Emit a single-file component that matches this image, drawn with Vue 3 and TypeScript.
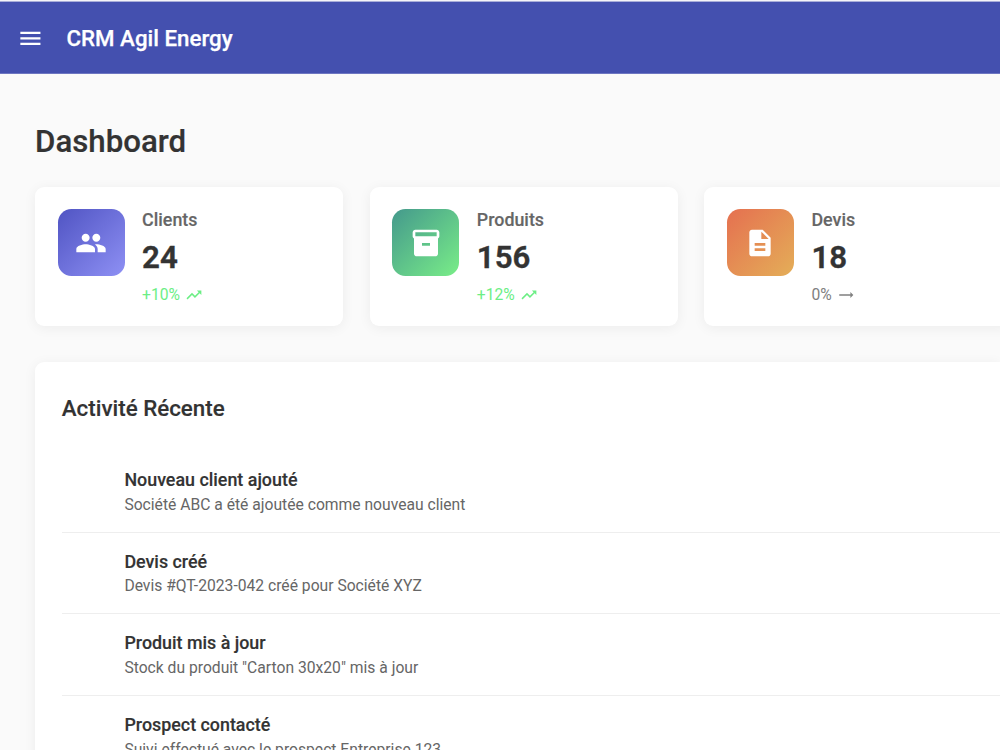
<script setup lang="ts">
interface Stat {
  label: string
  value: number
  change: string
  trend: 'up' | 'flat'
  tone: string
  icon: string
}

interface Activity {
  title: string
  detail: string
}

const trendIcons: Record<Stat['trend'], string> = {
  up: 'M16 6l2.29 2.29-4.88 4.88-4-4L2 16.59 3.41 18l6-6 4 4 6.3-6.29L22 12V6z',
  flat: 'M22 12l-4-4v3H3v2h15v3z',
}

const stats: Stat[] = [
  {
    label: 'Clients',
    value: 24,
    change: '+10%',
    trend: 'up',
    tone: 'indigo',
    icon: 'M16 11c1.66 0 2.99-1.34 2.99-3S17.66 5 16 5s-3 1.34-3 3 1.34 3 3 3zm-8 0c1.66 0 2.99-1.34 2.99-3S9.66 5 8 5 5 6.34 5 8s1.34 3 3 3zm0 2c-2.33 0-7 1.17-7 3.5V19h14v-2.5c0-2.33-4.67-3.5-7-3.5zm8 0c-.29 0-.62.02-.97.05 1.16.84 1.97 1.97 1.97 3.45V19h6v-2.5c0-2.33-4.67-3.5-7-3.5z',
  },
  {
    label: 'Produits',
    value: 156,
    change: '+12%',
    trend: 'up',
    tone: 'green',
    icon: 'M20 2H4c-1 0-2 .9-2 2v3.01c0 .72.43 1.34 1 1.69V20c0 1.1 1.1 2 2 2h14c.9 0 2-.9 2-2V8.7c.57-.35 1-.97 1-1.69V4c0-1.1-1-2-2-2zm-5 12H9v-2h6v2zm5-7H4V4h16v3z',
  },
  {
    label: 'Devis',
    value: 18,
    change: '0%',
    trend: 'flat',
    tone: 'orange',
    icon: 'M14 2H6c-1.1 0-1.99.9-1.99 2L4 20c0 1.1.89 2 1.99 2H18c1.1 0 2-.9 2-2V8l-6-6zm2 16H8v-2h8v2zm0-4H8v-2h8v2zm-3-5V3.5L18.5 9H13z',
  },
]

const activities: Activity[] = [
  { title: 'Nouveau client ajouté', detail: 'Société ABC a été ajoutée comme nouveau client' },
  { title: 'Devis créé', detail: 'Devis #QT-2023-042 créé pour Société XYZ' },
  { title: 'Produit mis à jour', detail: 'Stock du produit "Carton 30x20" mis à jour' },
  { title: 'Prospect contacté', detail: 'Suivi effectué avec le prospect Entreprise 123' },
]
</script>

<template>
  <div class="app">
    <header class="toolbar">
      <svg class="menu" viewBox="0 0 24 24"><path d="M3 18h18v-2H3v2zm0-5h18v-2H3v2zm0-7v2h18V6H3z" /></svg>
      <span class="brand">CRM Agil Energy</span>
    </header>
    <main class="content">
      <h1>Dashboard</h1>
      <section class="stats">
        <article v-for="s in stats" :key="s.label" class="card">
          <div class="badge" :class="s.tone">
            <svg viewBox="0 0 24 24"><path :d="s.icon" /></svg>
          </div>
          <div class="info">
            <h3>{{ s.label }}</h3>
            <div class="value">{{ s.value }}</div>
            <div class="change" :class="s.trend">
              <span>{{ s.change }}</span>
              <svg viewBox="0 0 24 24"><path :d="trendIcons[s.trend]" /></svg>
            </div>
          </div>
        </article>
      </section>
      <section class="panel">
        <h2>Activité Récente</h2>
        <ul>
          <li v-for="a in activities" :key="a.title">
            <div class="item-title">{{ a.title }}</div>
            <div class="item-detail">{{ a.detail }}</div>
          </li>
        </ul>
      </section>
    </main>
  </div>
</template>

<style>
body {
  margin: 0;
  overflow: hidden;
}
</style>

<style scoped>
.app {
  box-sizing: border-box;
  height: 750px;
  overflow: hidden;
  background: #fafafa;
  border-top: 1px solid #f4f4f8;
  font-family: Roboto, sans-serif;
  color: #333;
}
h1, h2, h3, ul {
  margin: 0;
  padding: 0;
  font-weight: 500;
}
ul {
  list-style: none;
  font-weight: 400;
}
svg {
  display: block;
  fill: currentColor;
  flex: none;
}
.toolbar {
  box-sizing: border-box;
  display: flex;
  align-items: center;
  height: 73px;
  padding: 0 0 0 17.4px;
  border-top: 1px solid #a9aed9;
  border-bottom: 1px solid #6d76c1;
  background: #4450af;
  color: #fff;
}
.menu {
  width: 26.8px;
  height: 26.8px;
  margin-top: 1px;
}
.brand {
  margin-left: 22.3px;
  font-size: 22.31px;
  font-weight: 500;
  -webkit-text-stroke: 0.25px;
}
.content {
  padding: 48px 0 0 35px;
}
h1 {
  font-size: 31.24px;
  line-height: 40px;
  height: 64.8px;
  -webkit-text-stroke: 0.2px;
}
.stats {
  display: grid;
  grid-template-columns: repeat(3, 308px);
  gap: 26.7px;
  margin-bottom: 35.7px;
}
.card {
  box-sizing: border-box;
  display: flex;
  gap: 17.6px;
  height: 139.1px;
  padding: 22.5px;
  border-radius: 9px;
  background: #fff;
  box-shadow: 0 2px 13px rgba(0, 0, 0, 0.06);
}
.badge {
  display: grid;
  place-items: center;
  width: 67px;
  height: 67px;
  border-radius: 13.4px;
  color: #fff;
}
.badge svg {
  width: 32px;
  height: 32px;
}
.indigo { background: linear-gradient(135deg, #5054c3, #8e90f4); }
.green { background: linear-gradient(135deg, #44998c, #79ed88); }
.orange { background: linear-gradient(135deg, #e57050, #e4ae58); }
h3 {
  font-size: 17.85px;
  line-height: 21px;
  color: #666;
  -webkit-text-stroke: 0.15px;
}
.value {
  margin-top: 9px;
  font-size: 31.24px;
  line-height: 37px;
  font-weight: 600;
  -webkit-text-stroke: 0.4px;
}
.change {
  display: flex;
  align-items: center;
  gap: 5px;
  margin-top: 9.8px;
  font-size: 15.66px;
  line-height: 18px;
}
.change svg {
  width: 17.85px;
  height: 17.85px;
}
.change.up { color: #6cee85; }
.change.flat { color: #808080; }
.panel {
  height: 500px;
  padding-left: 26.8px;
  border-radius: 9px 0 0 0;
  background: #fff;
  box-shadow: 0 2px 13px rgba(0, 0, 0, 0.06);
}
h2 {
  height: 16px;
  padding: 31.2px 0 42.2px;
  font-size: 22.35px;
  line-height: 30px;
  -webkit-text-stroke: 0.15px;
}
li {
  box-sizing: border-box;
  height: 81.6px;
  padding: 17.2px 0 0 62.6px;
  border-bottom: 1px solid #eee;
}
.item-title {
  font-size: 17.88px;
  line-height: 24px;
  font-weight: 500;
  -webkit-text-stroke: 0.15px;
}
.item-detail {
  margin-top: 0.7px;
  font-size: 15.66px;
  line-height: 24px;
  color: #666;
}
</style>
